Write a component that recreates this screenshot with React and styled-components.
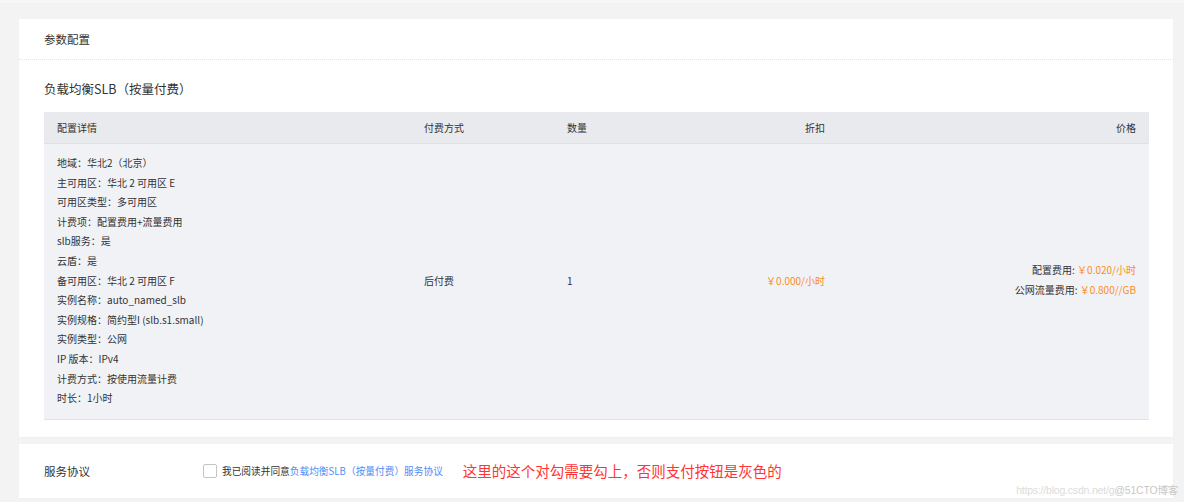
import styled, { createGlobalStyle } from "styled-components"

const GlobalStyle = createGlobalStyle`
  html, body {
    margin: 0;
    padding: 0;
    background: #f3f3f3;
  }
  body {
    font-family: "Noto Sans CJK SC", "Liberation Sans", sans-serif;
    color: #333;
  }
`

const Page = styled.div`
  position: relative;
  height: 502px;
  overflow: hidden;
  box-sizing: border-box;
  border-top: 3px solid #f7f7f7;
  padding: 16px 11px 0 19px;
  display: flex;
  flex-direction: column;
  gap: 7px;
`

const Card = styled.div`
  background: #fff;
  box-shadow: 0 1px 2px rgba(0, 0, 0, 0.02);
`

const CardHeader = styled.div`
  height: 40px;
  padding-left: 25px;
  display: flex;
  align-items: center;
  font-size: 11.5px;
  color: #333;
  border-bottom: 1px dotted #e4e4e4;
`

const CardBody = styled.div`
  padding: 18px 24px 17px 25px;
`

const ProductTitle = styled.div`
  font-size: 12.5px;
  color: #333;
  line-height: 22px;
  margin-bottom: 12px;
`

const Grid = styled.div`
  display: grid;
  grid-template-columns: 367px 143px 100px 158px 311px;
  padding: 0 13px;
`

const HeadRow = styled(Grid)`
  height: 31px;
  align-items: center;
  background: #e9eaee;
  border-bottom: 1px solid #dfe0e4;
  font-size: 10px;
  color: #333;
`

const BodyRow = styled(Grid)`
  background: #f1f2f6;
  align-items: center;
  padding-top: 9px;
  padding-bottom: 11px;
  border-bottom: 1px solid #e3e4e8;
  font-size: 10px;
  color: #333;
`

const Cell = styled.div`
  text-align: ${(p) => (p.$right ? "right" : "left")};
`

const DetailLine = styled.div`
  line-height: 19.6px;
  white-space: nowrap;
`

const Orange = styled.span`
  color: #fb8c1e;
`

const PriceLine = styled.div`
  line-height: 20px;
  white-space: nowrap;
`

const AgreementRow = styled.div`
  height: 54px;
  padding-left: 25px;
  display: flex;
  align-items: center;
`

const AgreementLabel = styled.div`
  width: 159px;
  font-size: 11.5px;
  color: #333;
`

const Check = styled.span`
  width: 12px;
  height: 12px;
  border: 1px solid #c4c4c4;
  border-radius: 2px;
  background: #fff;
  margin-right: 5px;
  flex: none;
`

const AgreeText = styled.span`
  font-size: 9.7px;
  color: #333;
  white-space: nowrap;
`

const Link = styled.span`
  color: #4f8ef6;
`

const Note = styled.span`
  margin-left: 20px;
  font-size: 14.5px;
  color: #ff3535;
  white-space: nowrap;
`

const Watermark = styled.div`
  position: absolute;
  right: 6px;
  bottom: 5px;
  font-family: "Liberation Sans", "Noto Sans CJK SC", sans-serif;
  font-size: 10.5px;
  color: #dcdcdc;
  letter-spacing: -0.2px;
  b {
    font-weight: normal;
    color: #c8c8c8;
  }
`

const details = [
  "地域：华北2（北京）",
  "主可用区：华北 2 可用区 E",
  "可用区类型：多可用区",
  "计费项：配置费用+流量费用",
  "slb服务：是",
  "云盾：是",
  "备可用区：华北 2 可用区 F",
  "实例名称：auto_named_slb",
  "实例规格：简约型I (slb.s1.small)",
  "实例类型：公网",
  "IP 版本：IPv4",
  "计费方式：按使用流量计费",
  "时长：1小时",
]

export default function App() {
  return (
    <>
      <GlobalStyle />
      <Page>
        <Card>
          <CardHeader>参数配置</CardHeader>
          <CardBody>
            <ProductTitle>负载均衡SLB（按量付费）</ProductTitle>
            <HeadRow>
              <Cell>配置详情</Cell>
              <Cell>付费方式</Cell>
              <Cell>数量</Cell>
              <Cell $right>折扣</Cell>
              <Cell $right>价格</Cell>
            </HeadRow>
            <BodyRow>
              <Cell>
                {details.map((d) => (
                  <DetailLine key={d}>{d}</DetailLine>
                ))}
              </Cell>
              <Cell>后付费</Cell>
              <Cell>1</Cell>
              <Cell $right>
                <Orange>￥0.000/小时</Orange>
              </Cell>
              <Cell $right>
                <PriceLine>
                  配置费用: <Orange>￥0.020/小时</Orange>
                </PriceLine>
                <PriceLine>
                  公网流量费用: <Orange>￥0.800//GB</Orange>
                </PriceLine>
              </Cell>
            </BodyRow>
          </CardBody>
        </Card>
        <Card>
          <AgreementRow>
            <AgreementLabel>服务协议</AgreementLabel>
            <Check />
            <AgreeText>
              我已阅读并同意<Link>负载均衡SLB（按量付费）服务协议</Link>
            </AgreeText>
            <Note>这里的这个对勾需要勾上，否则支付按钮是灰色的</Note>
          </AgreementRow>
        </Card>
        <Watermark>
          https://blog.csdn.net/g<b>@51CTO博客</b>
        </Watermark>
      </Page>
    </>
  )
}
